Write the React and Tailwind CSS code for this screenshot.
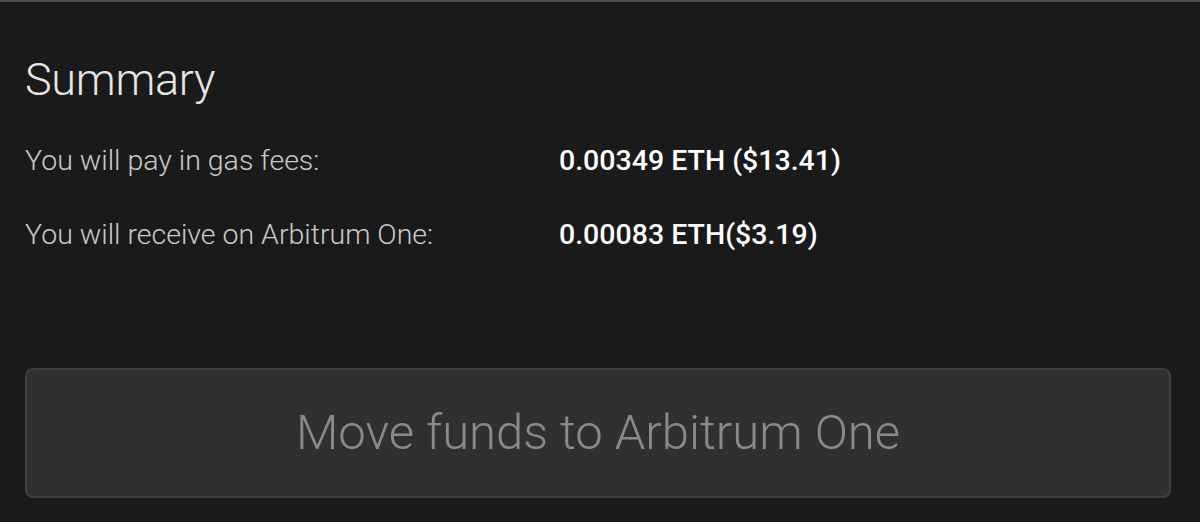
export default function App() {
  const rows = [
    { label: "You will pay in gas fees:", value: "0.00349 ETH ($13.41)" },
    { label: "You will receive on Arbitrum One:", value: "0.00083 ETH($3.19)" },
  ];

  return (
    <div className="w-[1200px] h-[522px] bg-[#1a1a1a] border-t-2 border-[#4d4d4d] font-['Roboto',sans-serif] flex flex-col pl-[25px] pr-[29px] overflow-hidden">
      <h1 className="text-[45px] font-light text-[#e6e6e6] leading-none mt-[55px] tracking-[-0.3px]">Summary</h1>

      <div className="flex flex-col gap-[42px] mt-[43px]">
        {rows.map((r) => (
          <div key={r.label} className="flex items-center">
            <span className="w-[534px] text-[28.5px] font-light text-[#cacaca] leading-[32px]">{r.label}</span>
            <span className="text-[28.5px] font-medium text-white leading-[32px]">{r.value}</span>
          </div>
        ))}
      </div>

      <button className="mt-[117px] h-[130px] w-full rounded-[8px] bg-[#303030] border-2 border-[#3e3e3e] text-[49px] font-light text-[#8a8a8a] flex items-center justify-center">
        Move funds to Arbitrum One
      </button>
    </div>
  );
}
